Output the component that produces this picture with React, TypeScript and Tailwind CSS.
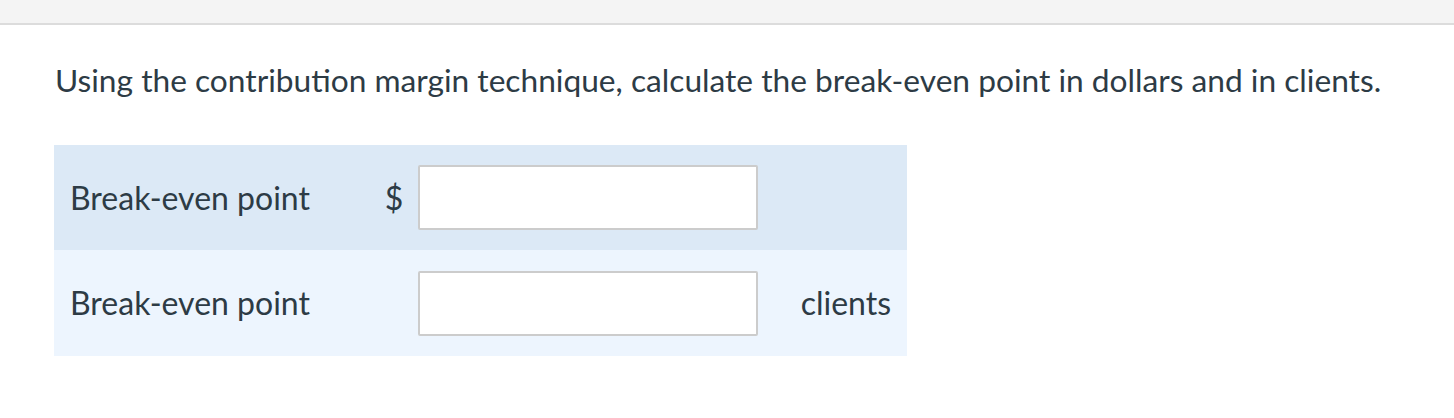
export default function App() {
  return (
    <div className="min-h-screen bg-white text-[#2d3b45]" style={{ fontFamily: 'Lato, "Open Sans", sans-serif' }}>
      <div className="h-[25px] bg-[#f4f4f4] border-b-2 border-[#dcdcdc]" />
      <div className="px-[55px] pt-[35px]">
        <p className="text-[31.7px] leading-[40px]">
          Using the contribution margin technique, calculate the break-even point in dollars and in clients.
        </p>
        <div className="mt-[45px] w-[853px] -ml-px">
          <div className="flex items-center h-[105px] bg-[#dce9f6] pl-4">
            <span className="w-[300px] text-[32px]">Break-even point</span>
            <span className="w-[48px] text-center text-[32px]">$</span>
            <input
              type="text"
              className="w-[340px] h-[65px] bg-white border-2 border-[#cccccc] rounded-[2px] outline-none px-3 text-[24px]"
            />
            <span className="pl-[43px] pr-4 text-[32px]" />
          </div>
          <div className="flex items-center h-[106px] bg-[#edf5fe] pl-4">
            <span className="w-[300px] text-[32px]">Break-even point</span>
            <span className="w-[48px]" />
            <input
              type="text"
              className="w-[340px] h-[65px] bg-white border-2 border-[#cccccc] rounded-[2px] outline-none px-3 text-[24px]"
            />
            <span className="pl-[43px] pr-4 text-[32px]">clients</span>
          </div>
        </div>
      </div>
    </div>
  );
}
